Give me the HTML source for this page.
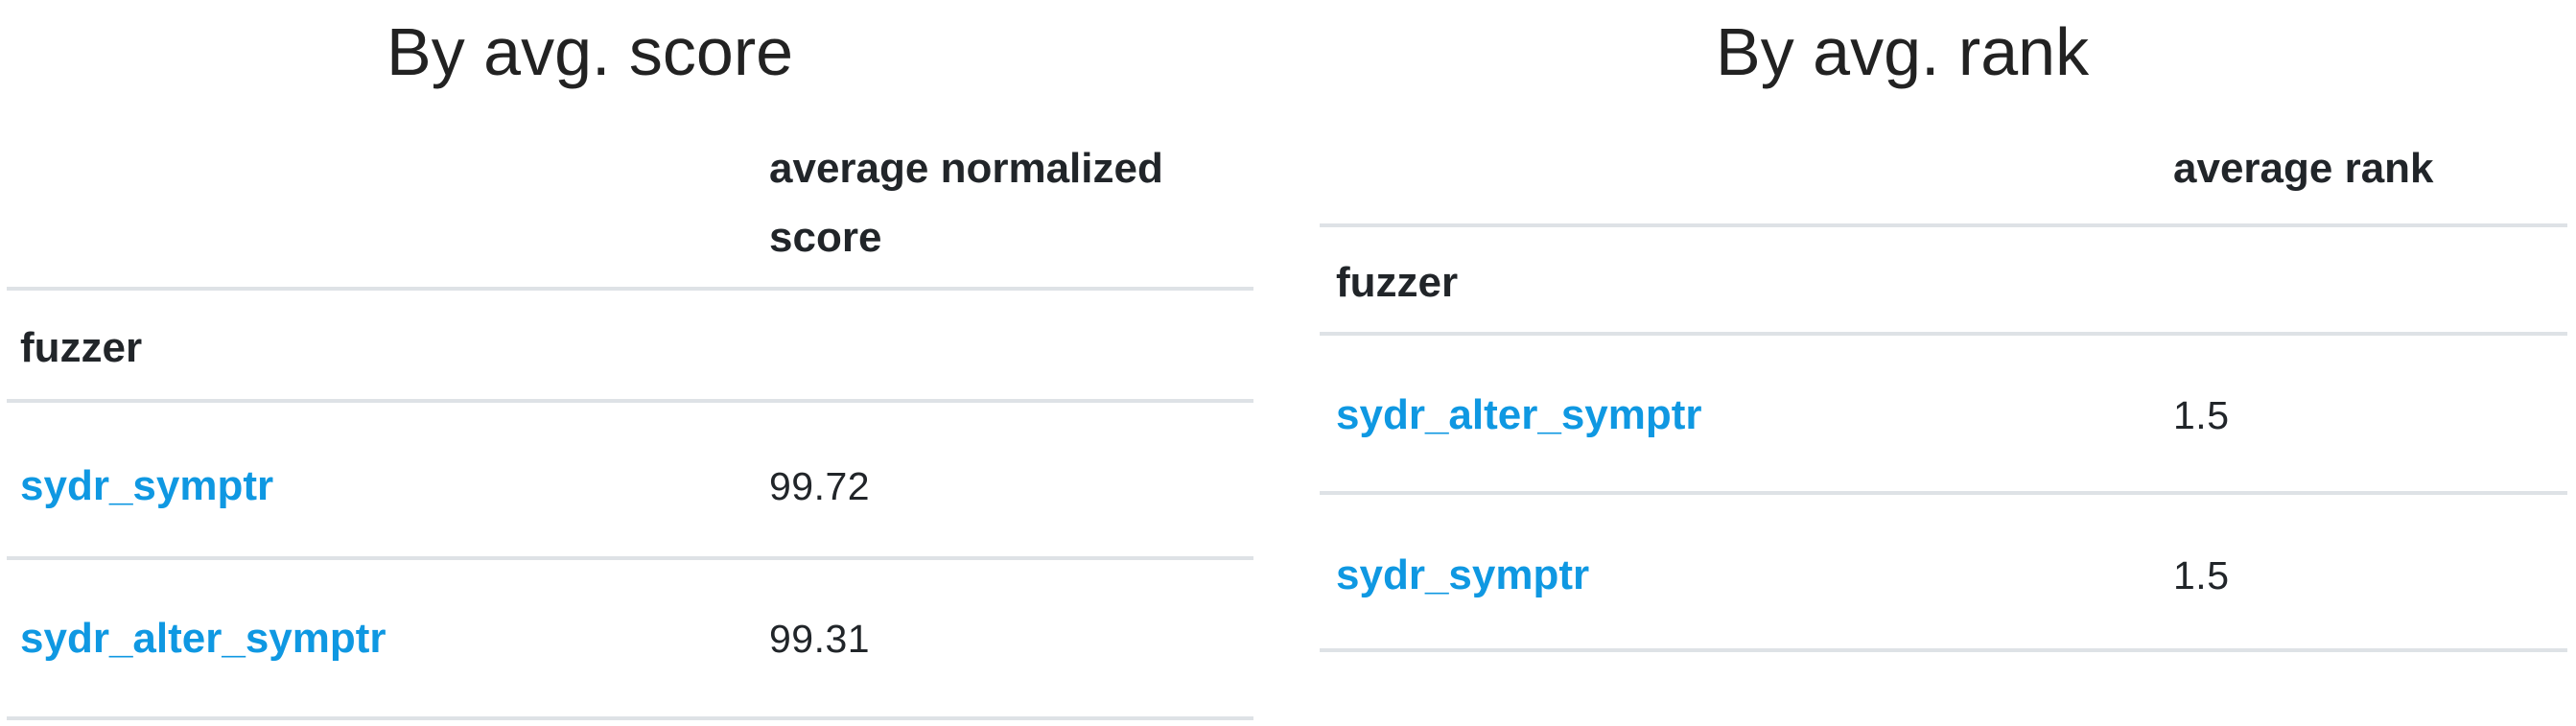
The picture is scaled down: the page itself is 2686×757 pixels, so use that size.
<!DOCTYPE html>
<html><head><style>
body{margin:0;width:2686px;height:757px;background:#fff;position:relative;overflow:hidden;font-family:"Liberation Sans",sans-serif;color:#212529}
div{position:absolute;white-space:nowrap}
.t{font-size:70px;font-weight:300;top:14px;line-height:80px;color:#222}
.h{font-weight:bold;font-size:44px;line-height:40px}
.l{position:absolute;height:4px;background:#dee2e6}
.a{color:#0f98e2;font-weight:bold;font-size:44px;line-height:40px}
.v{font-size:41px;line-height:40px;letter-spacing:0.5px}
</style></head><body>
<div class="t" style="left:403px">By avg. score</div>
<div class="t" style="left:1789px">By avg. rank</div>

<div class="h" style="left:802px;top:156px">average normalized</div>
<div class="h" style="left:802px;top:228px">score</div>
<div class="l" style="left:7px;width:1300px;top:299px"></div>
<div class="h" style="left:21px;top:343px">fuzzer</div>
<div class="l" style="left:7px;width:1300px;top:416px"></div>
<div class="a" style="left:21px;top:487px">sydr_symptr</div>
<div class="v" style="left:802px;top:487px">99.72</div>
<div class="l" style="left:7px;width:1300px;top:580px"></div>
<div class="a" style="left:21px;top:646px">sydr_alter_symptr</div>
<div class="v" style="left:802px;top:646px">99.31</div>
<div class="l" style="left:7px;width:1300px;top:747px"></div>

<div class="h" style="left:2266px;top:156px">average rank</div>
<div class="l" style="left:1376px;width:1301px;top:233px"></div>
<div class="h" style="left:1393px;top:275px">fuzzer</div>
<div class="l" style="left:1376px;width:1301px;top:346px"></div>
<div class="a" style="left:1393px;top:413px">sydr_alter_symptr</div>
<div class="v" style="left:2266px;top:413px">1.5</div>
<div class="l" style="left:1376px;width:1301px;top:512px"></div>
<div class="a" style="left:1393px;top:580px">sydr_symptr</div>
<div class="v" style="left:2266px;top:580px">1.5</div>
<div class="l" style="left:1376px;width:1301px;top:676px"></div>
</body></html>
